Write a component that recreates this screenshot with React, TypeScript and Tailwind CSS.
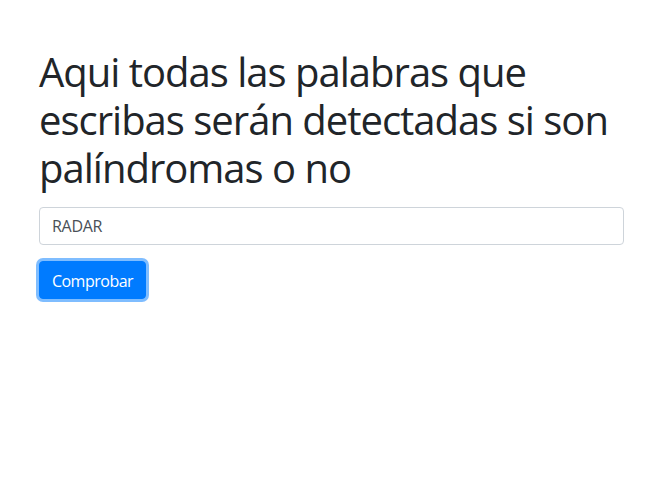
import React, { useState } from "react";

const App = () => {
    const [word, setWord] = useState("RADAR");

    return (
        <div className="min-h-screen bg-white font-['Segoe_UI','Open_Sans',sans-serif] text-[#212529]">
            <div className="pt-12 pl-[39px] w-[624px]">
                <h1 className="text-[40px] leading-[48px] font-normal tracking-[-1px] mb-[15px]">
                    Aqui todas las palabras que escribas serán detectadas si son palíndromas o no
                </h1>
                <input
                    type="text"
                    value={word}
                    onChange={(e) => setWord(e.target.value)}
                    className="block w-full h-[38px] px-3 py-1.5 mb-4 text-base tracking-[-0.3px] text-[#495057] bg-white border border-[#ced4da] rounded"
                />
                <button className="w-[107px] h-[38px] pt-px text-base tracking-[-0.5px] text-white bg-[#007bff] border border-[#007bff] rounded shadow-[0_0_0_3px_rgba(0,123,255,0.5)]">
                    Comprobar
                </button>
            </div>
        </div>
    );
};

export default App;
